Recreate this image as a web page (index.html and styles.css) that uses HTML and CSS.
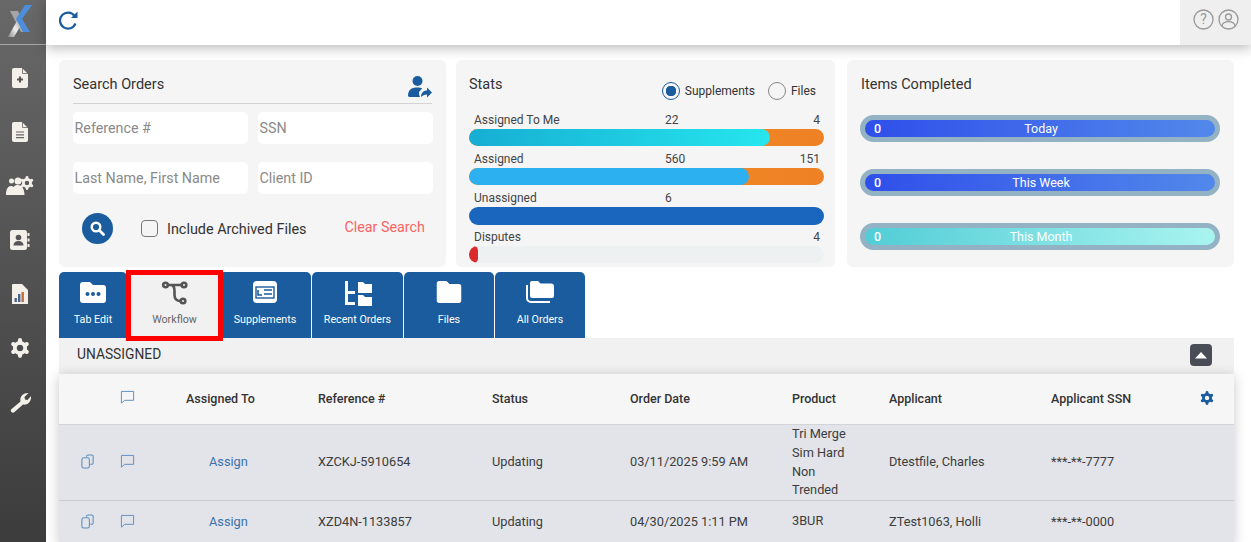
FILE: index.html
```html
<!DOCTYPE html>
<html lang="en">
<head>
<meta charset="utf-8">
<title>Orders</title>
<link rel="stylesheet" href="styles.css">
</head>
<body>
<svg class="defs" width="0" height="0" aria-hidden="true">
  <symbol id="gear" viewBox="0 0 24 24">
    <g fill="none" stroke="currentColor">
      <circle cx="12" cy="12" r="6.2" stroke-width="4.6"/>
      <path d="M12 2.6v3M12 18.4v3M3.9 7.3l2.6 1.5M17.5 15.2l2.6 1.5M3.9 16.7l2.6-1.5M17.5 8.8l2.6-1.5" stroke-width="5" stroke-linecap="round"/>
    </g>
  </symbol>
  <symbol id="flag" viewBox="0 0 16 16">
    <path d="M1.500 1.500h13v9.500H5L1.500 14z" fill="none" stroke="currentColor" stroke-width="1"/>
  </symbol>
  <symbol id="copy" viewBox="0 0 16 16">
    <path d="M7 3V2.500A1.500 1.500 0 0 1 8.500 1h4A1.500 1.500 0 0 1 14 2.500v7a1.500 1.500 0 0 1-1.500 1.500H11" fill="none" stroke="currentColor" stroke-width="1.100"/>
    <rect x="2" y="4" width="8" height="11" rx="2" fill="none" stroke="currentColor" stroke-width="1.100"/>
  </symbol>
</svg>
<div class="app">
  <aside class="sidebar">
    <div class="logo">
      <svg width="26" height="33" viewBox="0 0 26 33">
        <defs>
          <linearGradient id="xg" x1="0" y1="1" x2="1" y2="0"><stop offset="0" stop-color="#8c8c8c"/><stop offset=".5" stop-color="#eeeeee"/><stop offset="1" stop-color="#9a9a9a"/></linearGradient>
        </defs>
        <path d="M2 6h8l10 21h-7z" fill="#a5a5a5"/>
        <path d="M0 32 10 14l3 6-7 12z" fill="url(#xg)"/>
        <path d="M24 0h-7L8 14l7 13h7L14 14z" fill="#4b8fdc"/>
      </svg>
    </div>
    <nav class="nav">
      <div class="nav-item"><svg width="16" height="20" viewBox="0 0 16 20"><path d="M2 0h8l6 6v12a2 2 0 0 1-2 2H2a2 2 0 0 1-2-2V2a2 2 0 0 1 2-2z" fill="#f3f0ea"/><path d="M10.500 0v5.500H16" fill="none" stroke="#666" stroke-width=".8"/><path d="M8 8.500v6M5 11.500h6" stroke="#555" stroke-width="2"/></svg></div>
      <div class="nav-item"><svg width="16" height="20" viewBox="0 0 16 20"><path d="M2 0h8l6 6v12a2 2 0 0 1-2 2H2a2 2 0 0 1-2-2V2a2 2 0 0 1 2-2z" fill="#f3f0ea"/><path d="M10.500 0v5.500H16" fill="none" stroke="#666" stroke-width=".8"/><path d="M4 10h8M4 12.800h8M4 15.600h8" stroke="#666" stroke-width="1.200"/></svg></div>
      <div class="nav-item"><svg width="28" height="20" viewBox="0 0 28 20"><g fill="#f3f0ea"><circle cx="5.500" cy="5" r="2.500"/><circle cx="12" cy="5" r="3.500"/><path d="M0 19c0-6 2-9 5-9 1 0 2 .5 2.500 1 1-1.500 2.500-2 4.500-2 4 0 6.500 4 6.500 10z"/></g><svg x="14" y="0" width="14" height="14" color="#f3f0ea"><use href="#gear"/></svg></svg></div>
      <div class="nav-item"><svg width="20" height="20" viewBox="0 0 20 20"><rect x="0" y="0" width="17" height="20" rx="2.500" fill="#f3f0ea"/><circle cx="8.500" cy="7.500" r="2.800" fill="#555"/><path d="M3.500 15.500c0-3 2-4.500 5-4.500s5 1.500 5 4.500z" fill="#555"/><path d="M18.500 3v3M18.500 8.500v3M18.500 14v3" stroke="#f3f0ea" stroke-width="2"/></svg></div>
      <div class="nav-item"><svg width="16" height="20" viewBox="0 0 16 20"><path d="M1 0h9l6 6v14H0V1a1 1 0 0 1 1-1z" fill="#f3f0ea"/><rect x="2.500" y="14" width="2.400" height="4" fill="#46638e"/><rect x="6" y="10" width="2.400" height="8" fill="#46638e"/><rect x="9.500" y="8" width="2.400" height="10" fill="#c66a3c"/></svg></div>
      <div class="nav-item"><svg class="icon-light" width="20" height="20"><use href="#gear"/></svg></div>
      <div class="nav-item"><svg width="21" height="21" viewBox="0 0 21 21"><path d="M1 17.500 10.500 9.500C9.500 5 13 .5 18.500 1L14.500 5l.5 2.500 2.500.5 3.500-4c.8 5-3.500 9.500-8 8.500L4.500 20A2.200 2.200 0 0 1 1 17.500z" fill="#f3f0ea"/></svg></div>
    </nav>
  </aside>
  <div class="main">
    <header class="topbar">
      <svg class="refresh" width="20" height="20" viewBox="0 0 20 20"><path d="M15.600 6A8 8 0 1 0 16.500 13.500" fill="none" stroke="#1a5c9e" stroke-width="2.200"/><path d="M18.500 1.500V8h-6.500z" fill="#1a5c9e"/></svg>
      <div class="top-actions">
        <svg width="21" height="21" viewBox="0 0 21 21"><circle cx="10.500" cy="10.500" r="9.500" fill="none" stroke="#999" stroke-width="1.300"/><text x="10.500" y="15" text-anchor="middle" class="q">?</text></svg>
        <svg width="21" height="21" viewBox="0 0 21 21"><circle cx="10.500" cy="10.500" r="9.500" fill="none" stroke="#999" stroke-width="1.300"/><circle cx="10.500" cy="8" r="3" fill="none" stroke="#999" stroke-width="1.300"/><path d="M4 17c.5-3 3-4.300 6.500-4.300S16.500 14 17 17" fill="none" stroke="#999" stroke-width="1.300"/></svg>
      </div>
    </header>
    <div class="content">
      <section class="panels">
        <div class="panel search">
          <div class="search-head">
            <h2 class="title">Search Orders</h2>
            <svg width="24" height="24" viewBox="0 0 24 24"><circle cx="9.500" cy="6" r="5" fill="#1a5c9e"/><path d="M0 21c0-6 3-8.500 9.500-8.500 2 0 3.500.3 4.700.8L11 17c0 2 .2 3.500 1 5H2a2 2 0 0 1-2-1z" fill="#1a5c9e"/><path d="M13 22c0-4 2.500-6.500 6-6.500V12.500l5 5-5 5v-3c-2.500 0-4.500 1-6 2.500z" fill="#1a5c9e"/></svg>
          </div>
          <div class="fields">
            <input class="field" type="text" placeholder="Reference #">
            <input class="field" type="text" placeholder="SSN">
            <input class="field" type="text" placeholder="Last Name, First Name">
            <input class="field" type="text" placeholder="Client ID">
          </div>
          <div class="search-actions">
            <span class="search-btn"><svg width="15" height="15" viewBox="0 0 15 15"><circle cx="6" cy="6" r="4.300" fill="none" stroke="#fff" stroke-width="2.400"/><path d="M9.500 9.500 13.500 13.500" stroke="#fff" stroke-width="2.800" stroke-linecap="round"/></svg></span>
            <span class="check"></span>
            <span class="check-label">Include Archived Files</span>
            <span class="clear">Clear Search</span>
          </div>
        </div>
        <div class="panel stats">
          <div class="stats-head">
            <h2 class="title">Stats</h2>
            <div class="radios">
              <span class="radio on"></span><span class="radio-label">Supplements</span>
              <span class="radio"></span><span class="radio-label">Files</span>
            </div>
          </div>
          <div class="stat">
            <div class="stat-labels"><span class="s-name">Assigned To Me</span><span class="s-mid">22</span><span class="s-end">4</span></div>
            <div class="bar orange"><div class="fill cyan w-me"></div></div>
          </div>
          <div class="stat">
            <div class="stat-labels"><span class="s-name">Assigned</span><span class="s-mid">560</span><span class="s-end">151</span></div>
            <div class="bar orange"><div class="fill sky w-as"></div></div>
          </div>
          <div class="stat">
            <div class="stat-labels"><span class="s-name">Unassigned</span><span class="s-mid">6</span><span class="s-end"></span></div>
            <div class="bar tall blue"></div>
          </div>
          <div class="stat">
            <div class="stat-labels"><span class="s-name">Disputes</span><span class="s-mid"></span><span class="s-end">4</span></div>
            <div class="bar empty"><div class="fill red w-di"></div></div>
          </div>
        </div>
        <div class="panel items">
          <h2 class="title">Items Completed</h2>
          <div class="pill-list">
            <div class="pill indigo"><span class="pill-n">0</span><span class="pill-t">Today</span></div>
            <div class="pill indigo"><span class="pill-n">0</span><span class="pill-t">This Week</span></div>
            <div class="pill aqua"><span class="pill-n">0</span><span class="pill-t">This Month</span></div>
          </div>
        </div>
      </section>
      <nav class="tabs">
        <div class="tab t1">
          <svg width="26" height="22" viewBox="0 0 26 22"><path d="M3 1h7l3 3h10a3 3 0 0 1 3 3v12a3 3 0 0 1-3 3H3a3 3 0 0 1-3-3V4a3 3 0 0 1 3-3z" fill="#fff"/><circle cx="7.500" cy="13" r="2" fill="#1a5c9e"/><circle cx="13" cy="13" r="2" fill="#1a5c9e"/><circle cx="18.500" cy="13" r="2" fill="#1a5c9e"/></svg>
          <span>Tab Edit</span>
        </div>
        <div class="tab t2 active">
          <svg width="26" height="24" viewBox="0 0 26 24"><g fill="none" stroke="#555" stroke-width="2.600"><circle cx="3.500" cy="4" r="2.300"/><circle cx="22" cy="4" r="2.300"/><circle cx="21" cy="20" r="2.300"/><path d="M6 4h13.500M10 4c2 1 2.500 3 2.500 6v4c0 4 2 6 6 6"/></g></svg>
          <span>Workflow</span>
        </div>
        <div class="tab t3">
          <svg width="24" height="22" viewBox="0 0 24 22"><rect width="24" height="22" rx="4" fill="#fff"/><rect x="3" y="6" width="18" height="11" fill="none" stroke="#1a5c9e" stroke-width="1.400"/><path d="M5 9v5h4M11 9h8M11 13h8" fill="none" stroke="#1a5c9e" stroke-width="1.600"/></svg>
          <span>Supplements</span>
        </div>
        <div class="tab t4">
          <svg width="28" height="25" viewBox="0 0 28 25"><path d="M1 0h3v10h7v3H4v8h7v3H1z" fill="#fff"/><path d="M14 1h5l2 2h7v9H14zM14 14h5l2 2h7v9H14z" fill="#fff"/></svg>
          <span>Recent Orders</span>
        </div>
        <div class="tab t5">
          <svg width="25" height="22" viewBox="0 0 25 22"><path d="M3 0h7l3 3h9a3 3 0 0 1 3 3v13a3 3 0 0 1-3 3H3a3 3 0 0 1-3-3V3a3 3 0 0 1 3-3z" fill="#fff"/></svg>
          <span>Files</span>
        </div>
        <div class="tab t6">
          <svg width="28" height="22" viewBox="0 0 28 22"><path d="M6 0h6l2.500 2.500H25a3 3 0 0 1 3 3V15a2 2 0 0 1-2 2H6a2 2 0 0 1-2-2V2a2 2 0 0 1 2-2z" fill="#fff"/><path d="M1 4v13a4 4 0 0 0 4 4h19" fill="none" stroke="#fff" stroke-width="2"/></svg>
          <span>All Orders</span>
        </div>
      </nav>
      <section class="orders">
        <div class="orders-head">
          <span>UNASSIGNED</span>
          <span class="collapse"><svg width="12" height="7" viewBox="0 0 12 7"><path d="M6 0 12 6.500H0z" fill="#fff"/></svg></span>
        </div>
        <div class="table">
          <div class="row head">
            <div></div>
            <div class="ic"><svg width="15" height="15"><use href="#flag"/></svg></div>
            <div class="c-as">Assigned To</div>
            <div>Reference #</div>
            <div>Status</div>
            <div>Order Date</div>
            <div>Product</div>
            <div>Applicant</div>
            <div>Applicant SSN</div>
            <div class="cog"><svg width="14" height="14"><use href="#gear"/></svg></div>
          </div>
          <div class="row big">
            <div class="ic"><svg width="15" height="15"><use href="#copy"/></svg></div>
            <div class="ic"><svg width="15" height="15"><use href="#flag"/></svg></div>
            <div class="assign">Assign</div>
            <div>XZCKJ-5910654</div>
            <div>Updating</div>
            <div>03/11/2025 9:59 AM</div>
            <div class="prod">Tri Merge Sim Hard Non Trended</div>
            <div>Dtestfile, Charles</div>
            <div>***-**-7777</div>
            <div></div>
          </div>
          <div class="row small">
            <div class="ic"><svg width="15" height="15"><use href="#copy"/></svg></div>
            <div class="ic"><svg width="15" height="15"><use href="#flag"/></svg></div>
            <div class="assign">Assign</div>
            <div>XZD4N-1133857</div>
            <div>Updating</div>
            <div>04/30/2025 1:11 PM</div>
            <div class="prod">3BUR</div>
            <div>ZTest1063, Holli</div>
            <div>***-**-0000</div>
            <div></div>
          </div>
        </div>
      </section>
    </div>
  </div>
</div>
</body>
</html>
```
FILE: styles.css
```css
* { box-sizing: border-box; }
html, body { margin: 0; height: 100%; overflow: hidden; background: #fff; }
body { font-family: Roboto, "Liberation Sans", sans-serif; color: #333; }
.defs { position: absolute; }
.app { display: flex; height: 542px; overflow: hidden; }

.sidebar { width: 46px; flex: none; background: linear-gradient(180deg, #686868 0%, #3c3c3c 100%); }
.logo { height: 45px; border-bottom: 1px solid #a8a8a8; display: flex; align-items: flex-start; padding: 5px 0 0 8px; width: 47px; }
.nav { padding: 6px 6px 0 0; }
.nav-item { height: 54px; display: flex; align-items: center; justify-content: center; }
.icon-light { color: #f3f0ea; }

.main { flex: 1; min-width: 0; display: flex; flex-direction: column; }
.topbar { height: 45px; flex: none; display: flex; justify-content: space-between; align-items: stretch; background: #fff; box-shadow: 0 3px 12px rgba(0,0,0,.28); padding-left: 13px; position: relative; z-index: 2; }
.refresh { margin-top: 10px; }
.top-actions { width: 71px; background: #efefef; display: flex; gap: 4px; padding: 9px 0 0 13px; }
.q { font: 14px Roboto, sans-serif; fill: #999; }

.content { padding: 15px 17px 0 13px; }
.panels { display: grid; grid-template-columns: 387px 379px 387px; column-gap: 10px; height: 207px; }
.panels .items { margin-left: 2px; width: 387px; }
.panel { background: #f5f5f5; border-radius: 6px; padding: 14px; height: 207px; }
.title { margin: 1px 0 0; font-size: 14.500px; font-weight: 400; line-height: 20px; }

.search-head { display: flex; justify-content: space-between; align-items: flex-start; height: 30px; border-bottom: 1px solid #d4d4d4; }
.search-head svg { margin-top: 1px; }
.fields { display: grid; grid-template-columns: 175px 175px; column-gap: 10px; row-gap: 18px; margin-top: 8px; }
.field { height: 32px; border: 0; border-radius: 5px; background: #fff; padding: 0 1.500px; font: 14.300px Roboto, sans-serif; outline: 0; min-width: 0; }
.field::placeholder { color: #8a8a8a; opacity: 1; }
.search-actions { display: flex; align-items: center; margin-top: 18px; height: 32px; padding-left: 9px; }
.search-btn { width: 31px; height: 31px; border-radius: 50%; background: #1a5c9e; display: flex; align-items: center; justify-content: center; }
.check { width: 17px; height: 17px; border: 1.500px solid #777; border-radius: 4px; margin: 1px 0 0 28px; }
.check-label { font-size: 14.400px; margin: 2px 0 0 9px; }
.clear { margin: -2px 0 0 38px; font-size: 14.300px; color: #fa6464; }

.panel.stats { padding: 14px 10px 14px 13px; }
.stats-head { display: flex; justify-content: space-between; height: 36px; }
.radios { display: flex; align-items: center; height: 20px; margin: 7px 9px 0 0; font-size: 12px; }
.radio { width: 18px; height: 18px; border: 1.500px solid #888; border-radius: 50%; }
.radio.on { border-color: #1a5c9e; background: radial-gradient(circle, #1a5c9e 0 5px, transparent 5.500px); }
.radio-label { margin: 0 13px 0 5px; }
.radio-label:last-child { margin-right: 0; }
.stat { height: 39px; }
.stat-labels { display: grid; grid-template-columns: 191px 1fr auto; width: 355px; height: 19px; padding: 3px 4px 0 5px; font-size: 12px; line-height: 14px; color: #444; }
.s-end { text-align: right; }
.bar { height: 17px; border-radius: 9px; overflow: hidden; width: 355px; }
.bar.tall { height: 18px; }
.orange { background: linear-gradient(90deg, #f19028, #ee8124); }
.blue { background: #1a66bf; }
.empty { background: #eef1f2; }
.fill { height: 100%; border-radius: 9px; }
.cyan { background: linear-gradient(90deg, #16aed3, #26e6ee); }
.sky { background: #2cb0f0; }
.red { background: #d92b2b; }
.w-me { width: 301px; }
.w-as { width: 280px; }
.w-di { width: 9px; }

.pill-list { display: flex; flex-direction: column; gap: 27px; margin-top: 20px; }
.pill { height: 27px; width: 360px; border: 5px solid #93b3c4; border-radius: 14px; display: flex; align-items: center; color: #fff; font-size: 12.500px; margin-left: -1px; }
.indigo { background: linear-gradient(90deg, #2f4fea, #5288ea); }
.aqua { background: linear-gradient(90deg, #52cdd6, #a9f4f0); }
.pill-n { padding-left: 9px; font-weight: 500; }
.pill-t { flex: 1; text-align: center; padding-right: 14px; }

.tabs { display: flex; gap: 1px; height: 66px; margin-top: 5px; position: relative; z-index: 1; }
.tab { background: #1a5c9e; color: #fff; border-radius: 5px 5px 0 0; display: flex; flex-direction: column; align-items: center; font-size: 10.700px; position: relative; height: 66px; }
.tab svg { position: absolute; top: 9px; left: 50%; transform: translateX(-50%); }
.tab span { position: absolute; top: 42px; left: 0; right: 0; text-align: center; line-height: 12px; }
.t1 { width: 68px; margin-right: -1px; }
.t2 { width: 95px; }
.t3 { width: 92px; margin-left: -4px; }
.t4 { width: 91px; }
.t5 { width: 90px; }
.t6 { width: 90px; }
.active { background: #f1f1f1; color: #666; border-radius: 0; z-index: 1; }
.active::after { content: ""; position: absolute; inset: -2px -1px -3px -1px; border: 5px solid #f00; }

.orders-head { height: 36px; background: #f1f1f1; display: flex; justify-content: space-between; align-items: center; padding: 0 22px 5px 18px; font-size: 13.800px; }
.collapse { width: 22px; height: 22px; border-radius: 4px; background: #4a4d55; display: flex; align-items: center; justify-content: center; margin-top: 3px; }
.table { box-shadow: 0 2px 12px rgba(0,0,0,.22); }
.row { display: grid; grid-template-columns: 56px 25px 178px 174px 138px 162px 97px 162px 139px 44px; align-items: center; font-size: 12.750px; background: #e2e4e9; border-bottom: 1px solid #c8ccd2; color: #3c3c3c; }
.row.head { height: 51px; padding-bottom: 1px; background: #f6f6f6; font-weight: 500; color: #333; border-bottom: 1px solid #d2d4d8; font-size: 12.500px; }
.row.big { height: 76px; padding-bottom: 2px; }
.row.small { height: 42px; padding-bottom: 2px; border-bottom: 0; }
.ic { display: flex; justify-content: center; color: #5b8cc0; height: 15px; }
.head .ic { margin-top: -2px; }
.c-as { padding-left: 46px; }
.assign { padding-left: 69px; color: #3a72ab; }
.prod { line-height: 18.600px; max-width: 62px; }
.big .prod { margin: -1px 0 -3px; }
.cog { color: #1a5c9e; padding-left: 10px; height: 14px; margin-top: -2px; }
```
